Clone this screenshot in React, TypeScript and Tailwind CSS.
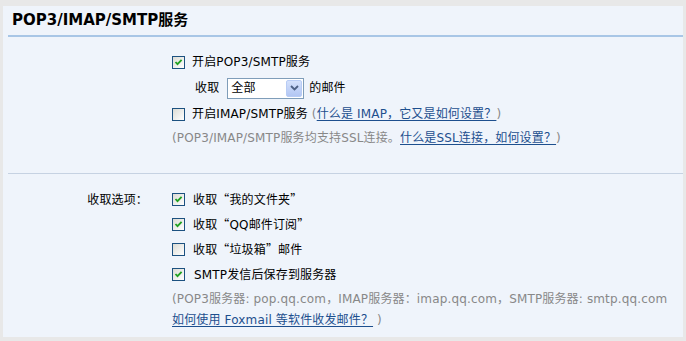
import React from 'react';

const font = { fontFamily: '"DejaVu Sans", "Noto Sans CJK SC", sans-serif' };
const cjk = { fontFamily: '"Noto Sans CJK SC", sans-serif' };

function Check({ on }: { on?: boolean }) {
  return (
    <span className="relative inline-block w-[13px] h-[13px] shrink-0 border border-[#1c5180] bg-gradient-to-br from-[#dcdcd5] to-white">
      {on && (
        <svg viewBox="0 0 11 11" className="absolute left-0 top-0 w-[11px] h-[11px]">
          <path d="M2.5 5 L4.5 7.2 L8.6 2.8" fill="none" stroke="#21a121" strokeWidth="1.8" />
        </svg>
      )}
    </span>
  );
}

function Select() {
  return (
    <span className="inline-flex items-center w-[77px] h-[21px] border border-[#7f9db9] bg-white">
      <span className="flex-1 pl-[3px] text-[12px] text-black">全部</span>
      <span className="flex items-center justify-center w-[16px] h-[17px] mr-[1px] rounded-[2px] border border-[#b8ccf5] bg-gradient-to-b from-[#d4e1fc] to-[#b2c6f3]">
        <svg viewBox="0 0 9 6" className="w-[9px] h-[6px]">
          <path d="M1 1 L4.5 4.5 L8 1" fill="none" stroke="#4d6185" strokeWidth="1.8" />
        </svg>
      </span>
    </span>
  );
}

function Link({ children }: { children: React.ReactNode }) {
  return <a href="#" className="text-[#1d4f8e] underline underline-offset-2">{children}</a>;
}

function Q({ children }: { children: React.ReactNode }) {
  return <span style={cjk}>{children}</span>;
}

export default function App() {
  return (
    <div style={font} className="w-[686px] h-[341px] bg-[#e8e8e8] pt-[6px] px-[3px] text-[12px] text-black">
      <div className="h-[331px] bg-[#eff4fb]">
        <div className="h-[29px] flex items-center pl-[9px] text-[15px] font-bold">
          POP3/IMAP/SMTP服务
        </div>
        <div className="ml-[5px] h-[2px] bg-[#a8c6e6]" />

        <div className="tracking-[0.15px]">
          <div className="pl-[169px] pt-[12px]">
            <div className="h-[26px] flex items-center gap-[7px]">
              <Check on />
              <span>开启POP3/SMTP服务</span>
            </div>
            <div className="h-[26px] flex items-center pl-[23px] gap-[5px]">
              <span className="mr-[3px]">收取</span>
              <Select />
              <span>的邮件</span>
            </div>
            <div className="h-[26px] flex items-center gap-[7px]">
              <Check />
              <span>
                开启IMAP/SMTP服务 <span className="text-[#888]">(</span><Link>什么是 IMAP，它又是如何设置？</Link><span className="text-[#888]">)</span>
              </span>
            </div>
            <div className="h-[21px] flex items-center text-[#888]">
              <span>
                (POP3/IMAP/SMTP服务均支持SSL连接。<Link>什么是SSL连接，如何设置？</Link>)
              </span>
            </div>
          </div>

          <div className="mt-[25px] ml-[5px] h-px bg-[#c6d2e2]" />

          <div className="flex pt-[13px]">
            <div className="w-[169px] pr-[24px] text-right">
              <div className="h-[25px] flex items-center justify-end">收取选项：</div>
            </div>
            <div className="flex-1">
              <div className="h-[25px] flex items-center gap-[8px]">
                <Check on />
                <span>收取<Q>“</Q>我的文件夹<Q>”</Q></span>
              </div>
              <div className="h-[25px] flex items-center gap-[8px]">
                <Check on />
                <span>收取<Q>“</Q>QQ邮件订阅<Q>”</Q></span>
              </div>
              <div className="h-[25px] flex items-center gap-[8px]">
                <Check />
                <span>收取<Q>“</Q>垃圾箱<Q>”</Q>邮件</span>
              </div>
              <div className="h-[25px] flex items-center gap-[9px]">
                <Check on />
                <span>SMTP发信后保存到服务器</span>
              </div>
              <div className="h-[24px] flex items-center text-[#888] whitespace-nowrap">
                (POP3服务器: pop.qq.com，IMAP服务器：imap.qq.com，SMTP服务器: smtp.qq.com
              </div>
              <div className="h-[18px] flex items-center text-[#888]">
                <span>
                  <Link>如何使用 Foxmail 等软件收发邮件？</Link> )
                </span>
              </div>
            </div>
          </div>
        </div>
      </div>
    </div>
  );
}
